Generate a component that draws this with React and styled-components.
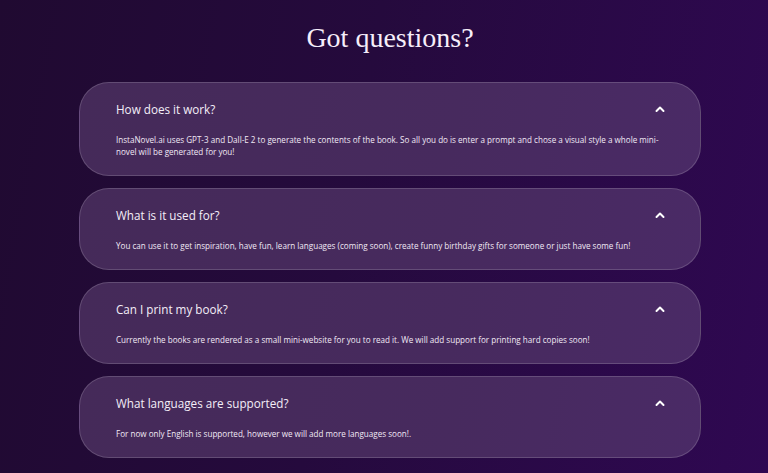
import React from "react";
import styled, { createGlobalStyle } from "styled-components";

const Global = createGlobalStyle`
  html, body { margin: 0; padding: 0; }
  body {
    background: linear-gradient(100deg, #200a31 0%, #250a3d 45%, #2f0852 100%);
    min-height: 473px;
    font-family: "Open Sans", "Noto Sans", sans-serif;
    color: #fff;
  }
`;

const Page = styled.main`
  min-height: 473px;
  padding: 19px 0 16px 12px;
  box-sizing: border-box;
  display: flex;
  flex-direction: column;
  align-items: center;
`;

const Title = styled.h1`
  margin: 0 0 25px;
  font-family: "Liberation Serif", "DejaVu Serif", serif;
  font-weight: 400;
  font-size: 28px;
  line-height: 38px;
  color: #f6eefa;
`;

const List = styled.div`
  width: 622px;
  display: flex;
  flex-direction: column;
  gap: 12px;
`;

const Card = styled.section`
  box-sizing: border-box;
  border-radius: 30px;
  background: linear-gradient(100deg, #452a59 0%, #472a5e 60%, #4a2a66 100%);
  border: 1px solid rgba(255, 255, 255, 0.16);
  padding: 17px 36px 17px 36px;
`;

const Header = styled.div`
  display: flex;
  align-items: center;
  justify-content: space-between;
  height: 18px;
`;

const Question = styled.h2`
  margin: 0;
  font-size: 11.7px;
  font-weight: 400;
  line-height: 18px;
  color: #f4eef8;
`;

const Chevron = styled.svg`
  width: 12px;
  height: 12px;
  margin-right: -2px;
  flex: none;
`;

const Answer = styled.p`
  margin: 16px 0 0;
  font-size: 8.1px;
  line-height: 12px;
  color: #f1e9f5;
  max-width: 548px;
`;

const faqs = [
  {
    q: "How does it work?",
    a: "InstaNovel.ai uses GPT-3 and Dall-E 2 to generate the contents of the book. So all you do is enter a prompt and chose a visual style a whole mini-novel will be generated for you!",
  },
  {
    q: "What is it used for?",
    a: "You can use it to get inspiration, have fun, learn languages (coming soon), create funny birthday gifts for someone or just have some fun!",
  },
  {
    q: "Can I print my book?",
    a: "Currently the books are rendered as a small mini-website for you to read it. We will add support for printing hard copies soon!",
  },
  {
    q: "What languages are supported?",
    a: "For now only English is supported, however we will add more languages soon!.",
  },
];

export default function App() {
  return (
    <>
      <Global />
      <Page>
        <Title>Got questions?</Title>
        <List>
          {faqs.map((f) => (
            <Card key={f.q}>
              <Header>
                <Question>{f.q}</Question>
                <Chevron viewBox="0 0 12 12" fill="none">
                  <path d="M2.5 8 L6 4.5 L9.5 8" stroke="#fff" strokeWidth="2" strokeLinecap="round" strokeLinejoin="round" />
                </Chevron>
              </Header>
              <Answer>{f.a}</Answer>
            </Card>
          ))}
        </List>
      </Page>
    </>
  );
}
